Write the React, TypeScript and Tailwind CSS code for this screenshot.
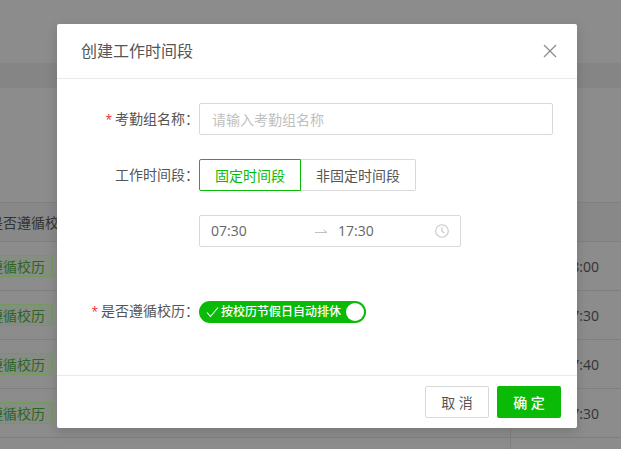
const font = '"Open Sans", "Noto Sans CJK SC", sans-serif';

function BackgroundRow({ time }: { time?: string }) {
  return (
    <div className="h-[49px] flex border-b border-[#7f7f7f]">
      <div className="flex-1 flex items-center">
        {time && (
          <span className="ml-[-47px] h-[22px] px-[7px] flex items-center rounded-[2px] border border-[#739a5e] bg-[#868d82] text-[14px] text-[#2f6428]">
            是否遵循校历
          </span>
        )}
      </div>
      <div className="w-[111px] h-full flex items-center justify-end border-l border-[#7f7f7f] pr-[22px] text-[14px] text-[#333]">
        {time}
      </div>
    </div>
  );
}

function Label({ text, required }: { text: string; required?: boolean }) {
  return (
    <label className="w-[142px] shrink-0 text-right text-[14px] leading-[32px] text-[#555]">
      {required && <span className="mr-[3px] text-[12px] text-[#f5222d]">*</span>}
      {text}：
    </label>
  );
}

export default function App() {
  return (
    <div className="relative w-[621px] h-[449px] overflow-hidden bg-[#8c8c8c]" style={{ fontFamily: font }}>
      {/* page behind the mask */}
      <div className="h-[63px]" />
      <div className="h-[25px] bg-[#858585]" />
      <div className="h-[114px]" />
      <div className="h-[39px] flex items-center bg-[#888888] border-t border-[#808080] text-[14px] text-[#333]">
        <span className="ml-[-11px] whitespace-nowrap">是否遵循校历</span>
      </div>
      <div className="border-t border-[#7f7f7f]">
        <BackgroundRow time="18:00" />
        <BackgroundRow time="17:30" />
        <BackgroundRow time="17:40" />
        <BackgroundRow time="17:30" />
        <BackgroundRow />
      </div>

      {/* modal */}
      <div className="absolute left-[57px] top-[24px] w-[520px] h-[404px] flex flex-col rounded-[2px] bg-white shadow-[0_4px_12px_rgba(0,0,0,0.15)]">
        <div className="h-[55px] shrink-0 flex items-center justify-between border-b border-[#e9e9e9] pl-[24px] pr-[20px]">
          <span className="text-[16px] text-[#555]">创建工作时间段</span>
          <svg width="14" height="14" viewBox="0 0 14 14" stroke="#8c8c8c" strokeWidth="1.2" fill="none">
            <line x1="1" y1="1" x2="13" y2="13" />
            <line x1="13" y1="1" x2="1" y2="13" />
          </svg>
        </div>

        <div className="flex-1 flex flex-col pt-[24px]">
          <div className="flex h-[32px]">
            <Label text="考勤组名称" required />
            <div className="w-[354px] h-[32px] flex items-center rounded-[2px] border border-[#d9d9d9] pl-[12px] text-[14px] text-[#bfbfbf]">
              请输入考勤组名称
            </div>
          </div>

          <div className="flex h-[32px] mt-[24px]">
            <Label text="工作时间段" />
            <div className="flex">
              <div className="w-[102px] h-[32px] flex items-center justify-center rounded-l-[2px] border border-[#09bb07] text-[14px] text-[#09bb07]">
                固定时间段
              </div>
              <div className="w-[115px] h-[32px] flex items-center justify-center rounded-r-[2px] border border-l-0 border-[#d9d9d9] text-[14px] text-[#555]">
                非固定时间段
              </div>
            </div>
          </div>

          <div className="flex h-[32px] mt-[24px] ml-[142px]">
            <div className="w-[262px] h-[32px] flex items-center rounded-[2px] border border-[#d9d9d9] px-[11px] text-[14px] text-[#666]">
              <span className="w-[104px] mb-[2px]">07:30</span>
              <svg className="w-[23px] h-[8px]" viewBox="0 0 23 8" fill="none" stroke="#bfbfbf" strokeWidth="1">
                <path d="M0 5.5H12L8.5 3" />
              </svg>
              <span className="flex-1 mb-[2px]">17:30</span>
              <svg width="14" height="14" viewBox="0 0 14 14" fill="none" stroke="#c8c8c8" strokeWidth="1.1">
                <circle cx="7" cy="7" r="6.3" />
                <path d="M7 3.2V7.3L9.4 9" />
              </svg>
            </div>
          </div>

          <div className="flex h-[32px] mt-[48px]">
            <Label text="是否遵循校历" required />
            <div className="w-[167px] h-[22px] mt-[6px] flex items-center rounded-full bg-[#09bb07] pl-[7px] pr-[2px] text-[12px] font-medium text-white">
              <svg width="13" height="12" viewBox="0 0 13 12" fill="none" stroke="#fff" strokeWidth="1.1">
                <path d="M1 6.5L4.5 10.5L12 1.5" />
              </svg>
              <span className="ml-[2px] flex-1 whitespace-nowrap">按校历节假日自动排休</span>
              <span className="w-[18px] h-[18px] rounded-full bg-white" />
            </div>
          </div>
        </div>

        <div className="h-[53px] shrink-0 flex items-center justify-end gap-[8px] border-t border-[#e9e9e9] pr-[16px]">
          <div className="w-[64px] h-[32px] flex items-center justify-center rounded-[2px] border border-[#d9d9d9] text-[14px] text-[#555]">
            取 消
          </div>
          <div className="w-[64px] h-[32px] flex items-center justify-center rounded-[2px] bg-[#09bb07] text-[14px] font-medium text-white">
            确 定
          </div>
        </div>
      </div>
    </div>
  );
}
